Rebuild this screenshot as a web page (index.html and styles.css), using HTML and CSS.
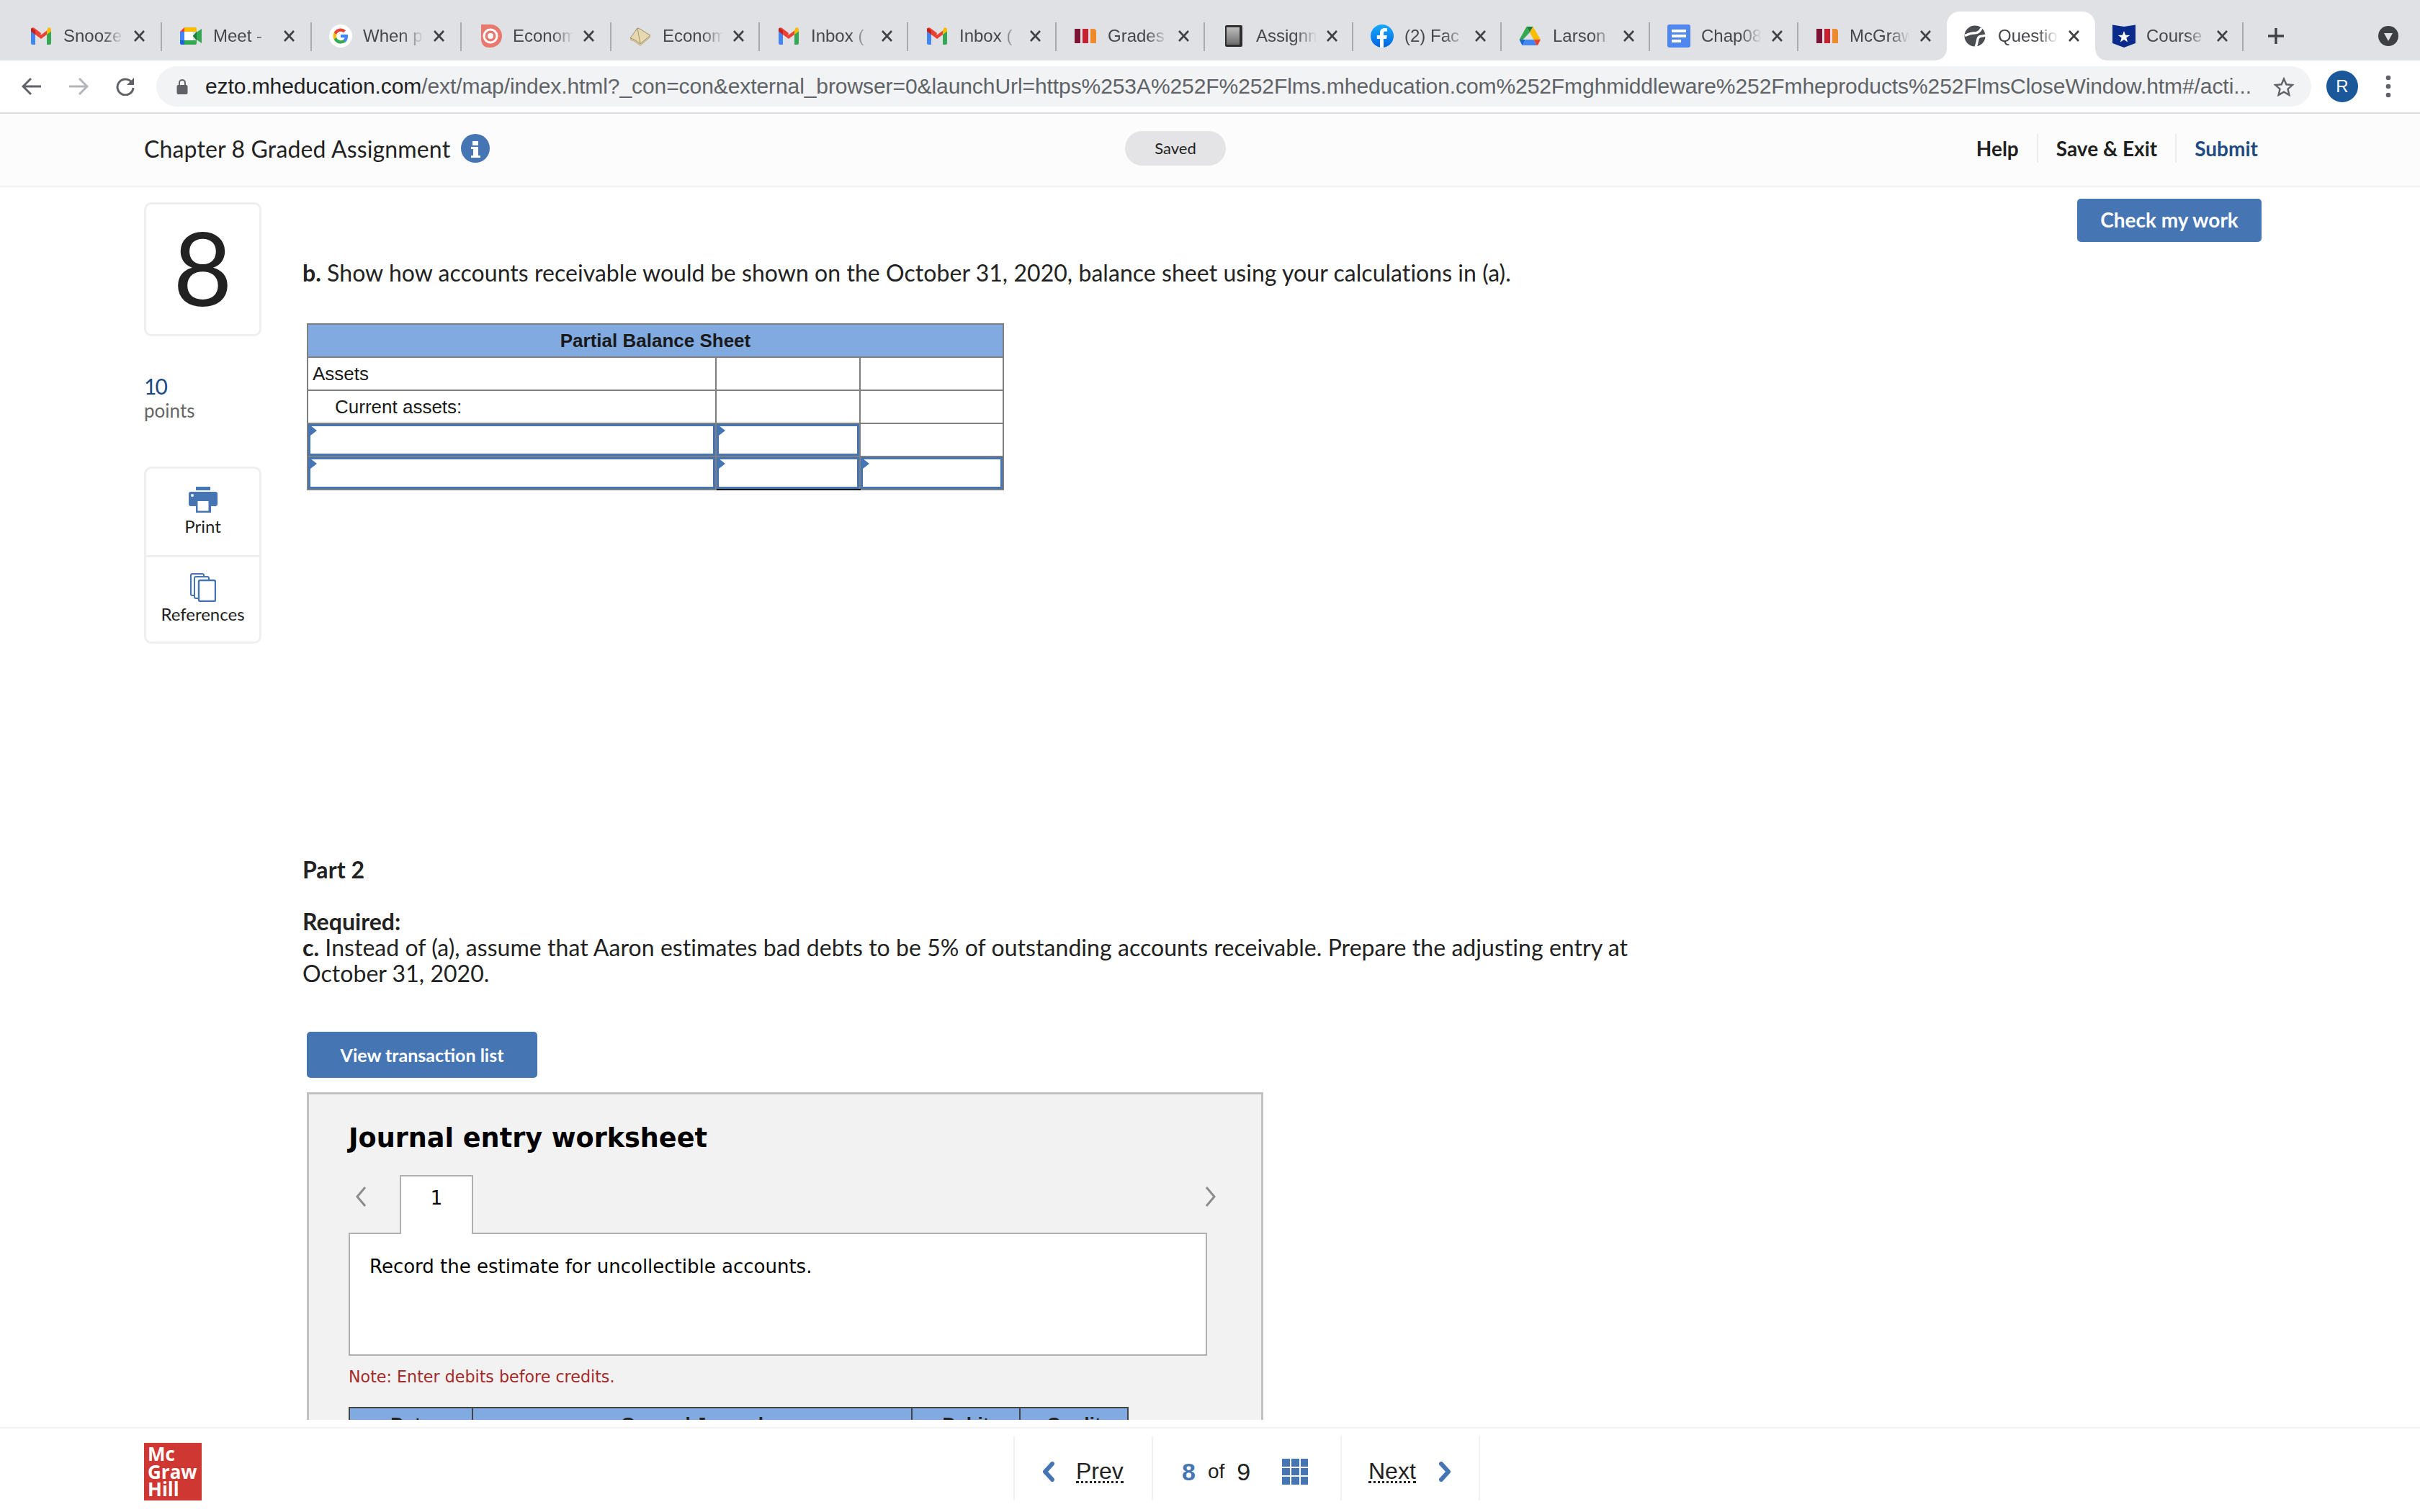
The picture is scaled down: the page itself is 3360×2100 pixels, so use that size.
FILE: index.html
```html
<!DOCTYPE html>
<html lang="en">
<head>
<meta charset="utf-8">
<title>Question</title>
<link rel="stylesheet" href="styles.css">
</head>
<body>
<svg class="defs" width="0" height="0" aria-hidden="true">
  <symbol id="i-gmail" viewBox="0 0 32 32">
    <path fill="#4285f4" d="M2 26V9l6 4.500V28H4a2 2 0 0 1-2-2z"/>
    <path fill="#34a853" d="M24 28V13.500L30 9v17a2 2 0 0 1-2 2z"/>
    <path fill="#ea4335" d="M8 14 2 9.500V7c0-2.500 3-3.500 4.500-2.300L16 12l-2 5z"/>
    <path fill="#c5221f" d="M2 9.500V7c0-1 .5-1.800 1.200-2.300L8 8.500V14z"/>
    <path fill="#ea4335" d="M8 8.500 16 14.500l8-6V14l-8 6-8-6z"/>
    <path fill="#fbbc04" d="M24 8.500l1.500-3.800C27 3.500 30 4.500 30 7v2.500L24 14z"/>
  </symbol>
  <symbol id="i-meet" viewBox="0 0 32 32">
    <path fill="#ea4335" d="M7 4v6H1z"/>
    <path fill="#fbbc04" d="M7 4h15a2 2 0 0 1 2 2v4H7z"/>
    <path fill="#4285f4" d="M1 10h6v12H1z"/>
    <path fill="#1967d2" d="M1 22h6v6H3a2 2 0 0 1-2-2z"/>
    <path fill="#34a853" d="M7 22h17v4a2 2 0 0 1-2 2H7z"/>
    <path fill="#fff" d="M7 10h12v12H7z"/>
    <path fill="#188038" d="M19 16l5-6v12z"/>
    <path fill="#34a853" d="M19 16l5-5.500h.5L31 6v20l-6.500-4.500H24z"/>
    <path fill="#188038" d="M24 10v12l-5-6z"/>
  </symbol>
  <symbol id="i-google" viewBox="0 0 32 32">
    <circle cx="16" cy="16" r="16" fill="#fff"/>
    <path fill="#4285f4" d="M26 16.300c0-.8-.1-1.500-.2-2.200H16v4.200h5.700c-.3 1.300-1 2.400-2.100 3.200v2.700h3.400c2-1.800 3-4.600 3-7.900z"/>
    <path fill="#34a853" d="M16 26.500c2.800 0 5.200-.9 7-2.500l-3.400-2.700c-1 .6-2.200 1-3.600 1-2.700 0-5-1.800-5.800-4.300H6.700v2.700c1.700 3.500 5.300 5.800 9.300 5.800z"/>
    <path fill="#fbbc05" d="M10.200 18c-.4-1.300-.4-2.700 0-4v-2.700H6.700a10.500 10.500 0 0 0 0 9.400z"/>
    <path fill="#ea4335" d="M16 9.700c1.500 0 2.900.5 4 1.600l3-3C21.200 6.600 18.700 5.500 16 5.500c-4 0-7.600 2.300-9.300 5.800l3.500 2.700c.8-2.500 3.100-4.300 5.800-4.300z"/>
  </symbol>
  <symbol id="i-target" viewBox="0 0 32 32">
    <path fill="#e9796f" d="M3 0h13a16 16 0 0 1 0 32h-3C7 32 3 27 3 20z"/>
    <circle cx="16" cy="16" r="10.500" fill="#fff"/>
    <circle cx="16" cy="16" r="7.500" fill="#e9796f"/>
    <circle cx="16" cy="16" r="4" fill="#fff"/>
  </symbol>
  <symbol id="i-book" viewBox="0 0 32 32">
    <path fill="#e8d8b0" stroke="#9a8a62" d="M2 19 12 5c5 1 10 6 18 10l-14 12C11 23 7 20 2 19z"/>
    <path fill="none" stroke="#a89868" d="M12 5l4 22"/>
    <path fill="#c9b98c" d="M2 20c5 1 9 4 14 8l14-12v2L16 30C11 26 7 23 2 22z"/>
  </symbol>
  <symbol id="i-bars" viewBox="0 0 32 32">
    <rect x="1" y="6" width="8" height="20" fill="#7c1436"/>
    <rect x="12" y="6" width="8" height="20" fill="#c8202f"/>
    <path fill="#ec8a2c" d="M23 6h4a4 4 0 0 1 4 4v16h-8z"/>
  </symbol>
  <symbol id="i-assign" viewBox="0 0 32 32">
    <defs><linearGradient id="g-assign" x1="0" y1="0" x2="0" y2="1"><stop offset="0" stop-color="#bdbdbd"/><stop offset="1" stop-color="#6e6e6e"/></linearGradient></defs>
    <rect x="4" y="1" width="24" height="30" rx="2" fill="#2d2d2d"/>
    <rect x="6" y="4" width="18" height="24" fill="url(#g-assign)"/>
  </symbol>
  <symbol id="i-fb" viewBox="0 0 32 32">
    <defs><linearGradient id="g-fb" x1="0" y1="0" x2="0" y2="1"><stop offset="0" stop-color="#18acfe"/><stop offset="1" stop-color="#0163e0"/></linearGradient></defs>
    <circle cx="16" cy="16" r="16" fill="url(#g-fb)"/>
    <path fill="#fff" d="M18 32V20h4l.8-5H18v-3c0-1.500.7-2.600 2.800-2.600H23V5.200C22 5 20.800 4.900 19.600 4.900c-4 0-6.600 2.400-6.600 6.700V15H8.800v5H13v12z"/>
  </symbol>
  <symbol id="i-drive" viewBox="0 0 32 32">
    <path fill="#188038" d="M10.500 3h9L15 11z"/>
    <path fill="#34a853" d="M10.500 3 15 11 5.500 21H.5z"/>
    <path fill="#fbbc04" d="M19.500 3 30 21h-9.500L15 11z"/>
    <path fill="#1967d2" d="M.5 21h8.500l-4 8h-.5z"/>
    <path fill="#4285f4" d="M9 21h11.500l4 8H5z"/>
    <path fill="#ea4335" d="M20.500 21H30l-4 8h-1.500z"/>
  </symbol>
  <symbol id="i-doc" viewBox="0 0 32 32">
    <rect x="0" y="0" width="32" height="32" rx="3" fill="#4f87ee"/>
    <rect x="6" y="7" width="20" height="4" fill="#fff"/>
    <rect x="6" y="14" width="20" height="4" fill="#fff"/>
    <rect x="6" y="21" width="13" height="4" fill="#fff"/>
  </symbol>
  <symbol id="i-globe" viewBox="0 0 32 32">
    <circle cx="15" cy="16" r="14.500" fill="#4a4d51"/>
    <path d="M24 5C22 11 17 12 13 12 9 12 5 14 1 15.500M30 15c-4 2-8 0-10 3-2 3-1 7-4 13" fill="none" stroke="#fff" stroke-width="3.400"/>
  </symbol>
  <symbol id="i-shield" viewBox="0 0 32 32">
    <path fill="#0a2a8c" d="M0 .5 16 3 32 .5V26L16 32 0 26z"/>
    <path fill="#fff" d="M16 9l2.100 5.800 6.100.1-4.900 3.600 1.800 5.900-5.100-3.500-5.100 3.500 1.800-5.900-4.900-3.600 6.100-.1z"/>
  </symbol>
  <symbol id="i-x" viewBox="0 0 16 16">
    <path d="M1.500 1 14.500 15M14.500 1 1.500 15" fill="none" stroke="#3f4145" stroke-width="2.600"/>
  </symbol>
</svg>

<header class="chrome">
  <div class="tabstrip">
    <div class="tab"><svg class="fav"><use href="#i-gmail"/></svg><span class="tab-title">Snooze</span><svg class="close"><use href="#i-x"/></svg></div>
    <div class="tab"><svg class="fav"><use href="#i-meet"/></svg><span class="tab-title">Meet -</span><svg class="close"><use href="#i-x"/></svg></div>
    <div class="tab"><svg class="fav"><use href="#i-google"/></svg><span class="tab-title">When p</span><svg class="close"><use href="#i-x"/></svg></div>
    <div class="tab"><svg class="fav"><use href="#i-target"/></svg><span class="tab-title">Econom</span><svg class="close"><use href="#i-x"/></svg></div>
    <div class="tab"><svg class="fav"><use href="#i-book"/></svg><span class="tab-title">Econom</span><svg class="close"><use href="#i-x"/></svg></div>
    <div class="tab"><svg class="fav"><use href="#i-gmail"/></svg><span class="tab-title">Inbox (</span><svg class="close"><use href="#i-x"/></svg></div>
    <div class="tab"><svg class="fav"><use href="#i-gmail"/></svg><span class="tab-title">Inbox (</span><svg class="close"><use href="#i-x"/></svg></div>
    <div class="tab"><svg class="fav"><use href="#i-bars"/></svg><span class="tab-title">Grades</span><svg class="close"><use href="#i-x"/></svg></div>
    <div class="tab"><svg class="fav"><use href="#i-assign"/></svg><span class="tab-title">Assignm</span><svg class="close"><use href="#i-x"/></svg></div>
    <div class="tab"><svg class="fav"><use href="#i-fb"/></svg><span class="tab-title">(2) Fac</span><svg class="close"><use href="#i-x"/></svg></div>
    <div class="tab"><svg class="fav"><use href="#i-drive"/></svg><span class="tab-title">Larson</span><svg class="close"><use href="#i-x"/></svg></div>
    <div class="tab"><svg class="fav"><use href="#i-doc"/></svg><span class="tab-title">Chap08</span><svg class="close"><use href="#i-x"/></svg></div>
    <div class="tab tab-before-active"><svg class="fav"><use href="#i-bars"/></svg><span class="tab-title">McGraw</span><svg class="close"><use href="#i-x"/></svg></div>
    <div class="tab tab-active"><svg class="fav"><use href="#i-globe"/></svg><span class="tab-title">Question</span><svg class="close"><use href="#i-x"/></svg></div>
    <div class="tab"><svg class="fav"><use href="#i-shield"/></svg><span class="tab-title">Course</span><svg class="close"><use href="#i-x"/></svg></div>
    <svg class="newtab" viewBox="0 0 24 24"><path d="M12 1v22M1 12h22" fill="none" stroke="#3f4145" stroke-width="3.400"/></svg>
    <svg class="tabsearch" viewBox="0 0 28 28"><circle cx="14" cy="14" r="14" fill="#3c4043"/><path d="M8 10h12l-6 11z" fill="#dfe1e5"/></svg>
  </div>
  <div class="toolbar">
    <svg class="tb-icon" viewBox="0 0 28 26"><path d="M27 13H3M13 2 2 13l11 11" fill="none" stroke="#5f6368" stroke-width="3"/></svg>
    <svg class="tb-icon" viewBox="0 0 28 26"><path d="M1 13h24M15 2l11 11-11 11" fill="none" stroke="#b3b5b8" stroke-width="3"/></svg>
    <svg class="tb-icon" viewBox="0 0 28 26"><path d="M23 7.500A11 11 0 1 0 25 15" fill="none" stroke="#5f6368" stroke-width="3"/><path d="M26 1v10H16z" fill="#5f6368"/></svg>
    <div class="omnibox">
      <svg class="lock" viewBox="0 0 16 22"><path d="M4 10V6a4 4 0 0 1 8 0v4" fill="none" stroke="#5f6368" stroke-width="2"/><rect x="0.500" y="9" width="15" height="13" rx="2" fill="#5f6368"/></svg>
      <div class="url"><span class="url-host">ezto.mheducation.com</span>/ext/map/index.html?_con=con&amp;external_browser=0&amp;launchUrl=https%253A%252F%252Flms.mheducation.com%252Fmghmiddleware%252Fmheproducts%252FlmsCloseWindow.htm#/acti...</div>
      <svg class="star" viewBox="0 0 28 27"><path d="M14 2.500l3.400 7.800 8.500.8-6.400 5.600 1.900 8.300-7.400-4.400-7.400 4.400 1.900-8.300-6.400-5.600 8.500-.8z" fill="none" stroke="#5f6368" stroke-width="2.400"/></svg>
    </div>
    <div class="avatar">R</div>
    <svg class="kebab" viewBox="0 0 8 32"><circle cx="4" cy="4" r="3.300" fill="#5f6368"/><circle cx="4" cy="16" r="3.300" fill="#5f6368"/><circle cx="4" cy="28" r="3.300" fill="#5f6368"/></svg>
  </div>
</header>

<div class="app-header">
  <div class="app-title">
    <span>Chapter 8 Graded Assignment</span>
    <svg class="info" viewBox="0 0 40 40"><circle cx="20" cy="20" r="20" fill="#4675b4"/><path d="M16 10h8v6h-8zM14 18h10v12h3v3H14v-3h3v-9h-3z" fill="#fff"/></svg>
  </div>
  <div class="saved">Saved</div>
  <nav class="app-links">
    <a class="link">Help</a>
    <a class="link">Save &amp; Exit</a>
    <a class="link link-submit">Submit</a>
  </nav>
</div>

<main class="main">
  <aside class="side">
    <div class="qnum">8</div>
    <div class="pts"><div class="pts-val">10</div><div class="pts-lbl">points</div></div>
    <div class="tools">
      <div class="tool">
        <svg class="tool-print" viewBox="0 0 40 36"><rect x="10" y="0" width="20" height="5" fill="#4675b4"/><path d="M3 7h34a3 3 0 0 1 3 3v14a3 3 0 0 1-3 3h-6v9H10v-9H3a3 3 0 0 1-3-3V10a3 3 0 0 1 3-3z" fill="#4675b4"/><rect x="12.500" y="20" width="15" height="13.500" fill="#fff"/><circle cx="5" cy="12" r="2" fill="#fff"/></svg>
        <span>Print</span>
      </div>
      <div class="tool">
        <svg class="tool-ref" viewBox="0 0 36 40"><path d="M5 31H3a2 2 0 0 1-2-2V3a2 2 0 0 1 2-2h14a2 2 0 0 1 2 2v2" fill="none" stroke="#4675b4" stroke-width="2"/><path d="M11 35H8a2 2 0 0 1-2-2V7a2 2 0 0 1 2-2h16a2 2 0 0 1 2 2v3" fill="#fff" stroke="#4675b4" stroke-width="2"/><rect x="12" y="10" width="23" height="29" rx="2" fill="#fff" stroke="#4675b4" stroke-width="2.400"/></svg>
        <span>References</span>
      </div>
    </div>
  </aside>

  <section class="question">
    <p class="prompt prompt-b"><b>b.</b> Show how accounts receivable would be shown on the October 31, 2020, balance sheet using your calculations in (a).</p>
    <table class="bs">
      <colgroup><col class="bs-c1"><col class="bs-c2"><col class="bs-c3"></colgroup>
      <tr><th colspan="3">Partial Balance Sheet</th></tr>
      <tr><td>Assets</td><td></td><td></td></tr>
      <tr><td class="indent">Current assets:</td><td></td><td></td></tr>
      <tr><td class="inp"></td><td class="inp"></td><td></td></tr>
      <tr><td class="inp"></td><td class="inp inp-dark"></td><td class="inp"></td></tr>
    </table>
    <p class="prompt part"><b>Part 2</b></p>
    <p class="prompt required"><b>Required:</b><br><b>c.</b> Instead of (a), assume that Aaron estimates bad debts to be 5% of outstanding accounts receivable. Prepare the adjusting entry at October 31, 2020.</p>
    <button class="btn btn-view">View transaction list</button>
    <div class="panel">
      <h2 class="panel-title">Journal entry worksheet</h2>
      <div class="je-tabs">
        <svg class="chev" viewBox="0 0 18 30"><path d="M15 2 4 15l11 13" fill="none" stroke="#8c8c8c" stroke-width="3"/></svg>
        <div class="je-tab">1</div>
        <svg class="chev chev-right" viewBox="0 0 18 30"><path d="M3 2l11 13L3 28" fill="none" stroke="#8c8c8c" stroke-width="3"/></svg>
      </div>
      <div class="je-box">Record the estimate for uncollectible accounts.</div>
      <p class="je-note">Note: Enter debits before credits.</p>
      <table class="je-table">
        <colgroup><col class="je-c1"><col class="je-c2"><col class="je-c3"><col class="je-c3"></colgroup>
        <tr><th>Date</th><th>General Journal</th><th>Debit</th><th>Credit</th></tr>
      </table>
    </div>
  </section>

  <div class="actions"><button class="btn btn-check">Check my work</button></div>
</main>

<footer class="footer">
  <div class="logo">Mc<br>Graw<br>Hill</div>
  <div class="pager">
    <div class="pg pg-prev">
      <svg class="pg-chev" viewBox="0 0 18 28"><path d="M14 3 4 14l10 11" fill="none" stroke="#4675b4" stroke-width="6" stroke-linecap="round" stroke-linejoin="round"/></svg>
      <span class="pg-link">Prev</span>
    </div>
    <div class="pg pg-mid">
      <span class="pg-cur">8</span><span class="pg-of">of</span><span class="pg-total">9</span>
      <div class="pg-grid"><i></i><i></i><i></i><i></i><i></i><i></i><i></i><i></i><i></i></div>
    </div>
    <div class="pg pg-next">
      <span class="pg-link">Next</span>
      <svg class="pg-chev" viewBox="0 0 18 28"><path d="M4 3l10 11L4 25" fill="none" stroke="#4675b4" stroke-width="6" stroke-linecap="round" stroke-linejoin="round"/></svg>
    </div>
  </div>
</footer>
</body>
</html>
```
FILE: styles.css
```css
* { box-sizing: border-box; }
html, body { margin: 0; height: 100%; }
body {
  width: 3360px; height: 2100px; overflow: hidden; background: #fff; color: #222;
  font-family: Lato, "Open Sans", sans-serif; display: flex; flex-direction: column;
}
.defs { position: absolute; }

/* browser chrome */
.chrome { flex: none; }
.tabstrip {
  height: 84px; background: #dfe1e5; display: flex; align-items: flex-end; padding-left: 17px; position: relative;
  font-family: "Liberation Sans", sans-serif;
}
.tab {
  flex: 0 0 206px; height: 68px; display: flex; align-items: center; position: relative; padding-left: 24px;
}
.tab:nth-child(-n+4) { flex-basis: 208px; }
.tab::after {
  content: ""; position: absolute; right: 0; top: 15px; height: 40px; width: 2px; background: #a8aaae;
}
.tab-before-active::after { display: none; }
.tab-active { background: #fff; border-radius: 18px 18px 0 0; }
.tab-active::before, .tab-active::after {
  content: ""; position: absolute; top: auto; bottom: 0; width: 16px; height: 16px;
}
.tab-active::before { left: -16px; background: radial-gradient(circle at 0 0, transparent 15.5px, #fff 16px); }
.tab-active::after { right: -16px; background: radial-gradient(circle at 100% 0, transparent 15.5px, #fff 16px); }
.fav { width: 32px; height: 32px; flex: none; }
.tab-title {
  margin-left: 15px; width: 84px; flex: none; overflow: hidden; white-space: nowrap; font-size: 24px; color: #45474a;
  -webkit-mask-image: linear-gradient(to right, #000 65%, transparent 100%); mask-image: linear-gradient(to right, #000 65%, transparent 100%);
}
.close { width: 17px; height: 16px; margin-left: 13px; flex: none; }
.newtab { width: 24px; height: 24px; position: absolute; left: 3148px; top: 38px; }
.tabsearch { width: 28px; height: 28px; position: absolute; left: 3302px; top: 36px; }

.toolbar {
  height: 74px; background: #fff; border-bottom: 2px solid #dedde3; display: flex; align-items: center; padding-left: 30px;
}
.tb-icon { width: 28px; height: 26px; flex: none; margin-right: 37px; }
.tb-icon:nth-child(3) { margin-right: 29px; }
.omnibox {
  flex: 0 0 2992px; height: 56px; border-radius: 28px; background: #f1f3f4; display: flex; align-items: center; padding-left: 28px;
}
.lock { width: 16px; height: 22px; flex: none; }
.url {
  margin-left: 24px; width: 2842px; white-space: nowrap; overflow: hidden; font-size: 30px; color: #5f6368; letter-spacing: -0.08px;
  font-family: "Liberation Sans", sans-serif;
}
.url-host { color: #202124; }
.star { width: 28px; height: 27px; flex: none; margin-left: 30px; }
.avatar {
  width: 44px; height: 44px; border-radius: 50%; background: #1a5899; color: #fff; font: 24px/44px "Liberation Sans", sans-serif;
  text-align: center; margin-left: 21px; flex: none;
}
.kebab { width: 8px; height: 32px; margin-left: 38px; flex: none; }

/* assignment header */
.app-header {
  flex: none; height: 102px; background: #fcfcfc; border-bottom: 2px solid #f2f2f2; display: grid;
  grid-template-columns: 1362px auto 1fr; align-items: center; padding: 0 225px 4px 200px;
}
.app-title { display: flex; align-items: center; gap: 15px; font-size: 32px; color: #222; letter-spacing: 0.15px; }
.info { width: 40px; height: 40px; }
.saved { width: 140px; height: 48px; border-radius: 24px; background: #e4e3e5; font-size: 22px; line-height: 48px; text-align: center; color: #222; }
.app-links { justify-self: end; display: flex; align-items: center; font-size: 28px; font-weight: 700; color: #1f1f1f; }
.link { padding: 0 25px; height: 40px; line-height: 40px; border-right: 2px solid #ececec; }
.link:first-child { padding-left: 0; }
.link-submit { border-right: 0; padding-right: 0; color: #1f4a82; }

/* main */
.main { flex: none; height: 1712px; overflow: hidden; display: flex; padding-left: 200px; }
.side { flex: 0 0 163px; padding-top: 21px; }
.qnum {
  height: 186px; border: 3px solid #efefef; border-radius: 10px; font-size: 142px; line-height: 172px; text-align: center; color: #222;
}
.pts { margin-top: 52px; }
.pts-val { font-size: 30px; line-height: 34px; color: #1c4a85; letter-spacing: -2px; }
.pts-lbl { font-size: 26px; line-height: 34px; color: #666; }
.tools { margin-top: 61px; border: 3px solid #efefef; border-radius: 10px; }
.tool { height: 120px; display: flex; flex-direction: column; align-items: center; font-size: 24px; line-height: 24px; color: #222; padding-top: 25px; }
.tool + .tool { border-top: 3px solid #efefef; height: 120px; padding-top: 22px; }
.tool-print { width: 40px; height: 36px; margin-bottom: 7px; flex: none; }
.tool-ref { width: 36px; height: 40px; margin-bottom: 5px; flex: none; }

.question { flex: 0 0 2380px; margin-left: 57px; }
.prompt { margin: 0; font-size: 32px; line-height: 35px; max-width: 1900px; color: #222; letter-spacing: 0.05px; }
.prompt-b { margin-top: 101px; }
.bs {
  border-collapse: collapse; table-layout: fixed; width: 966px; margin: 53px 0 0 6px;
  font: 26px "Liberation Sans", sans-serif; color: #1a1a1a;
}
.bs-c1 { width: 567px; } .bs-c2 { width: 200px; } .bs-c3 { width: 199px; }
.bs th { height: 46px; background: #80aae0; border: 2px solid #7f7f7f; padding: 0; font-weight: 700; }
.bs td { height: 46px; border: 2px solid #7f7f7f; padding: 0 0 0 6px; position: relative; }
.bs td.indent { padding-left: 37px; }
.bs td.inp { box-shadow: inset 0 0 0 3px #4675b4; }
.bs td.inp::before {
  content: ""; position: absolute; left: 3px; top: 2px; border-left: 9px solid #4675b4; border-top: 7px solid transparent; border-bottom: 7px solid transparent;
}
.bs td.inp-dark { border-bottom-color: #111; }
.part { margin-top: 509px; }
.required { margin-top: 37px; line-height: 36px; }
.btn {
  border: 0; border-radius: 5px; background: #4675b4; color: #fff; font-family: Lato, "Open Sans", sans-serif; font-weight: 700; padding: 0; display: block;
}
.btn-view { width: 320px; height: 64px; font-size: 25px; margin: 63px 0 0 6px; }
.panel {
  width: 1328px; margin: 20px 0 0 6px; background: #f2f2f2; border: 3px solid #c2c2c2; padding: 35px 0 0 55px;
  font-family: "DejaVu Sans", Verdana, sans-serif; color: #000; height: 600px;
}
.panel-title { margin: 0; font-size: 36.6px; line-height: 52px; font-weight: 700; }
.je-tabs { width: 1206px; margin-top: 25px; display: flex; align-items: flex-start; height: 80px; }
.chev { width: 18px; height: 30px; margin: 15px 0 0 8px; flex: none; }
.je-tab {
  width: 102px; height: 82px; margin-left: 45px; background: #fff; border: 2px solid #b0b0b0; border-bottom: 0; position: relative; z-index: 1;
  text-align: center; font-size: 26px; line-height: 60px;
}
.chev-right { margin-left: auto; }
.je-box { width: 1192px; height: 171px; background: #fff; border: 2px solid #b0b0b0; padding: 29px 27px; font-size: 26px; line-height: 32px; }
.je-note { margin: 16px 0 0; font-size: 22.2px; line-height: 26px; color: #a52a2a; }
.je-table { border-collapse: collapse; table-layout: fixed; width: 1082px; margin-top: 29px; font: 700 26px "Liberation Sans", sans-serif; }
.je-c1 { width: 171px; } .je-c2 { width: 610px; } .je-c3 { width: 150px; }
.je-table th { height: 46px; background: #80aae0; border: 2px solid #444; padding: 0; color: #222; }

.actions { flex: 1; display: flex; justify-content: flex-end; padding: 16px 220px 0 0; }
.btn-check { width: 256px; height: 60px; font-size: 28px; padding-bottom: 2px; }

/* footer */
.footer {
  flex: none; height: 118px; margin-top: 10px; border-top: 2px solid #f2f2f2; position: relative; display: flex; padding: 20px 0 0 200px;
}
.logo {
  width: 80px; height: 80px; background: #cf3732; color: #fff; font: 700 26px/24.5px "Open Sans", sans-serif; padding: 3px 0 0 5px;
}
.pager { display: flex; height: 90px; margin: -10px 0 0 1127px; border-left: 2px solid #f2f2f2; }
.pg { display: flex; align-items: center; border-right: 2px solid #f2f2f2; font: 32px "Liberation Sans", sans-serif; color: #222; padding-top: 10px; }
.pg-prev { width: 192px; padding-left: 38px; gap: 29px; }
.pg-mid { width: 262px; padding-left: 40px; }
.pg-next { width: 192px; padding-left: 37px; gap: 31px; }
.pg-chev { width: 18px; height: 28px; flex: none; }
.pg-link { border-bottom: 3px dotted #222; line-height: 28px; }
.pg-cur { color: #4675b4; font-weight: 700; font-size: 34px; }
.pg-of { margin-left: 17px; font-size: 28px; }
.pg-total { margin-left: 17px; font-size: 34px; }
.pg-grid { width: 36px; height: 36px; margin-left: 44px; display: grid; grid-template-columns: repeat(3, 1fr); gap: 2px; }
.pg-grid i { background: #4675b4; }
```
